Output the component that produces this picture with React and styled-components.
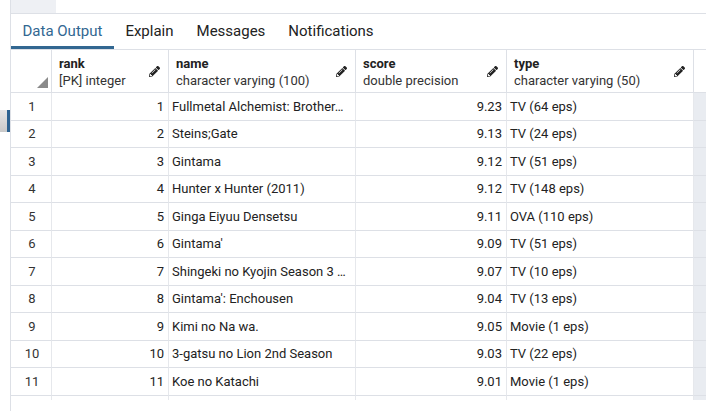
import React from 'react';
import styled, { createGlobalStyle } from 'styled-components';
import { FaPencilAlt } from 'react-icons/fa';

const GlobalStyle = createGlobalStyle`
  html, body {
    margin: 0;
    padding: 0;
    background: #ffffff;
    font-family: Roboto, "Liberation Sans", Arial, sans-serif;
    color: #222222;
    overflow: hidden;
  }
`;

const Page = styled.div`
  display: flex;
  width: 706px;
  height: 411px;
  overflow: hidden;
`;

const Gutter = styled.div`
  width: 10px;
  flex-shrink: 0;
  border-right: 1px solid #dde0e6;
  display: flex;
  flex-direction: column;
`;

const Handle = styled.div`
  margin-top: 110px;
  height: 22px;
  background: linear-gradient(180deg, #e6e6e6 0%, #c9c9c9 100%);
  border-right: 3px solid #2d6290;
`;

const Main = styled.div`
  flex: 1;
  display: flex;
  flex-direction: column;
  min-width: 0;
`;

const TopStrip = styled.div`
  height: 13px;
  border-bottom: 1px solid #dde0e6;
  display: flex;
`;

const StripTab = styled.div`
  width: 45px;
  background: #eef0f4;
`;

const TabBar = styled.div`
  display: flex;
  height: 35px;
  border-bottom: 1px solid #dde0e6;
`;

const Tab = styled.div`
  padding: 0 11.5px;
  font-size: 15px;
  display: flex;
  align-items: center;
  padding-top: 1px;
  box-sizing: border-box;
  color: ${(p) => (p.$active ? '#326791' : '#222222')};
  border-bottom: 3px solid ${(p) => (p.$active ? '#326791' : 'transparent')};
`;

const COLS = '41px 117px 187px 151px 187px 1fr';

const Grid = styled.div`
  display: grid;
  grid-template-columns: ${COLS};
`;

const HeadCell = styled.div`
  height: 43px;
  border-bottom: 1px solid #dde0e6;
  border-right: ${(p) => (p.$last ? 'none' : '1px solid #dde0e6')};
  position: relative;
  display: flex;
  align-items: center;
  justify-content: space-between;
  padding: 0 8px 0 7px;
  box-sizing: border-box;
`;

const HeadText = styled.div`
  display: flex;
  flex-direction: column;
  font-size: 13px;
  line-height: 17px;
  margin-top: 1px;
`;

const ColName = styled.span`
  font-weight: 700;
  color: #222222;
`;

const ColType = styled.span`
  color: #333333;
`;

const Pencil = styled(FaPencilAlt)`
  width: 11px;
  height: 11px;
  color: #222222;
  flex-shrink: 0;
`;

const SortMark = styled.div`
  position: absolute;
  right: 3px;
  bottom: 4px;
  width: 0;
  height: 0;
  border-left: 11px solid transparent;
  border-bottom: 11px solid #8a8a8a;
`;

const Cell = styled.div`
  height: 27.5px;
  box-sizing: border-box;
  border-bottom: 1px solid #dde0e6;
  border-right: ${(p) => (p.$last ? 'none' : '1px solid #e6e8ec')};
  background: ${(p) => (p.$filler ? '#e9ecf1' : '#ffffff')};
  font-size: 13px;
  color: #222222;
  display: flex;
  align-items: center;
  justify-content: ${(p) => (p.$align === 'right' ? 'flex-end' : p.$align === 'center' ? 'center' : 'flex-start')};
  padding: 0 ${(p) => (p.$align === 'right' ? '4px' : '3px')};
  white-space: nowrap;
  overflow: hidden;
`;

const RowNum = styled(Cell)`
  color: #333333;
  padding: 0 0 0 2px;
`;

const Stub = styled.div`
  height: 4px;
  border-right: ${(p) => (p.$last ? 'none' : '1px solid #e6e8ec')};
  background: ${(p) => (p.$filler ? '#e9ecf1' : '#ffffff')};
`;

const columns = [
  { name: 'rank', type: '[PK] integer' },
  { name: 'name', type: 'character varying (100)' },
  { name: 'score', type: 'double precision' },
  { name: 'type', type: 'character varying (50)' },
];

const rows = [
  [1, 'Fullmetal Alchemist: Brother…', '9.23', 'TV (64 eps)'],
  [2, 'Steins;Gate', '9.13', 'TV (24 eps)'],
  [3, 'Gintama', '9.12', 'TV (51 eps)'],
  [4, 'Hunter x Hunter (2011)', '9.12', 'TV (148 eps)'],
  [5, 'Ginga Eiyuu Densetsu', '9.11', 'OVA (110 eps)'],
  [6, "Gintama'", '9.09', 'TV (51 eps)'],
  [7, 'Shingeki no Kyojin Season 3 …', '9.07', 'TV (10 eps)'],
  [8, "Gintama': Enchousen", '9.04', 'TV (13 eps)'],
  [9, 'Kimi no Na wa.', '9.05', 'Movie (1 eps)'],
  [10, '3-gatsu no Lion 2nd Season', '9.03', 'TV (22 eps)'],
  [11, 'Koe no Katachi', '9.01', 'Movie (1 eps)'],
];

const tabs = ['Data Output', 'Explain', 'Messages', 'Notifications'];

export default function App() {
  return (
    <>
      <GlobalStyle />
      <Page>
        <Gutter>
          <Handle />
        </Gutter>
        <Main>
          <TopStrip>
            <StripTab />
          </TopStrip>
          <TabBar>
            {tabs.map((t, i) => (
              <Tab key={t} $active={i === 0}>
                {t}
              </Tab>
            ))}
          </TabBar>
          <Grid>
            <HeadCell>
              <SortMark />
            </HeadCell>
            {columns.map((c) => (
              <HeadCell key={c.name}>
                <HeadText>
                  <ColName>{c.name}</ColName>
                  <ColType>{c.type}</ColType>
                </HeadText>
                <Pencil />
              </HeadCell>
            ))}
            <HeadCell $last />

            {rows.map(([rank, name, score, type]) => (
              <React.Fragment key={rank}>
                <RowNum $align="center">{rank}</RowNum>
                <Cell $align="right">{rank}</Cell>
                <Cell>{name}</Cell>
                <Cell $align="right">{score}</Cell>
                <Cell>{type}</Cell>
                <Cell $filler $last />
              </React.Fragment>
            ))}

            <Stub />
            <Stub />
            <Stub />
            <Stub />
            <Stub />
            <Stub $filler $last />
          </Grid>
        </Main>
      </Page>
    </>
  );
}
